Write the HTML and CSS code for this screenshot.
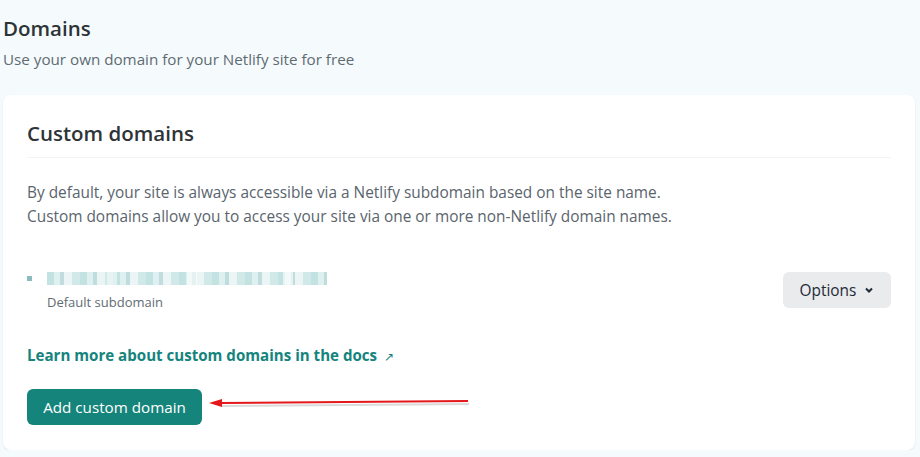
FILE: index.html
```html
<!DOCTYPE html>
<html lang="en">
<head>
<meta charset="utf-8">
<title>Domains</title>
<link rel="stylesheet" href="styles.css">
</head>
<body>
<main class="page">
  <header class="page-head">
    <h1 class="page-title">Domains</h1>
    <p class="page-sub">Use your own domain for your Netlify site for free</p>
  </header>
  <section class="card">
    <h2 class="card-title">Custom domains</h2>
    <div class="card-body">
      <p class="desc">By default, your site is always accessible via a Netlify subdomain based on the site name.<br>Custom domains allow you to access your site via one or more non-Netlify domain names.</p>
      <div class="domain-row">
        <div class="domain-info">
          <div class="domain-name">
            <span class="bullet"></span>
            <span class="blur" aria-hidden="true"></span>
          </div>
          <div class="domain-meta">Default subdomain</div>
        </div>
        <button class="btn-options">Options
          <svg class="chev" width="10" height="10" viewBox="0 0 10 10"><path d="M2 3.5 L5 6.5 L8 3.5" fill="none" stroke="#1f2a36" stroke-width="2"/></svg>
        </button>
      </div>
      <a class="docs-link" href="#">Learn more about custom domains in the docs <span class="ext">↗</span></a>
      <div class="action-row">
        <button class="btn-primary">Add custom domain</button>
        <div class="arrow">
          <svg width="264" height="14" viewBox="0 0 264 14"><path d="M12 7 L260 5" stroke="#b9b9b9" stroke-width="2" opacity="0.5" transform="translate(1,2)"/><path d="M12 6 L260 4" stroke="#e4171b" stroke-width="2"/><path d="M1 6 L14 2 L14 10 Z" fill="#e4171b"/></svg>
        </div>
      </div>
    </div>
  </section>
</main>
</body>
</html>
```
FILE: styles.css
```css
html, body {
  margin: 0;
  padding: 0;
}
body {
  background: #f5fbfc;
  font-family: "Open Sans", "Noto Sans", sans-serif;
  color: #2e3338;
}
.page {
  padding: 13px 5px 0 3px;
}
.page-title {
  margin: 0;
  font-size: 20.5px;
  font-weight: 600;
  line-height: 30px;
  color: #2e3338;
}
.page-sub {
  margin: 5px 0 0;
  font-size: 15.2px;
  line-height: 22px;
  color: #5f6b73;
}
.card {
  margin-top: 25px;
  background: #fff;
  border-radius: 8px;
  box-shadow: 0 1px 2px rgba(120, 150, 160, 0.2);
  padding: 24px;
  height: 355px;
  box-sizing: border-box;
}
.card-title {
  margin: 0;
  font-size: 20.5px;
  font-weight: 600;
  line-height: 28px;
  color: #2e3338;
  padding-bottom: 10px;
  border-bottom: 1px solid #f2f4f5;
}
.card-body {
  padding-top: 23px;
}
.desc {
  margin: 0;
  font-size: 15.4px;
  line-height: 24px;
  color: #5a646d;
}
.domain-row {
  margin-top: 42px;
  display: flex;
  justify-content: space-between;
  align-items: flex-start;
}
.domain-name {
  display: flex;
  align-items: center;
  gap: 15px;
  height: 14px;
}
.bullet {
  width: 5px;
  height: 5px;
  background: #8bbcbc;
}
.blur {
  width: 280px;
  height: 13px;
  background:
    linear-gradient(90deg, rgba(255,255,255,0) 0 60px, rgba(255,255,255,0.5) 60px 70px, rgba(255,255,255,0) 70px 140px, rgba(255,255,255,0.6) 140px 150px, rgba(255,255,255,0) 150px 236px, rgba(255,255,255,0.6) 236px 246px, rgba(255,255,255,0) 246px),
    repeating-linear-gradient(90deg, rgba(120,190,190,0.55) 0 7px, rgba(190,225,225,0.6) 7px 13px, rgba(100,170,175,0.5) 13px 17px, rgba(215,235,235,0.6) 17px 25px, rgba(150,205,205,0.55) 25px 33px);
  opacity: 0.8;
}
.domain-meta {
  margin-top: 7px;
  padding-left: 20px;
  font-size: 13px;
  line-height: 20px;
  color: #5f6b73;
}
.btn-options {
  margin-top: 1px;
  width: 108px;
  height: 36px;
  border: none;
  border-radius: 6px;
  background: #e9ebed;
  font-family: inherit;
  font-size: 15.4px;
  color: #1f2a36;
  display: flex;
  align-items: center;
  justify-content: center;
  gap: 8px;
  padding: 0;
}
.docs-link {
  display: inline-block;
  margin-top: 33px;
  font-size: 15.1px;
  font-weight: 700;
  line-height: 20px;
  color: #15847d;
  text-decoration: none;
}
.ext {
  font-weight: 400;
  font-size: 12px;
  margin-left: 3px;
}
.action-row {
  margin-top: 22px;
  display: flex;
  align-items: center;
  gap: 6px;
}
.btn-primary {
  height: 36px;
  padding: 0;
  width: 175px;
  border: none;
  border-radius: 6px;
  background: #15847a;
  color: #fff;
  font-family: inherit;
  font-size: 15.2px;
}
.arrow {
  display: flex;
  align-items: center;
  margin-top: -6px;
}
```
